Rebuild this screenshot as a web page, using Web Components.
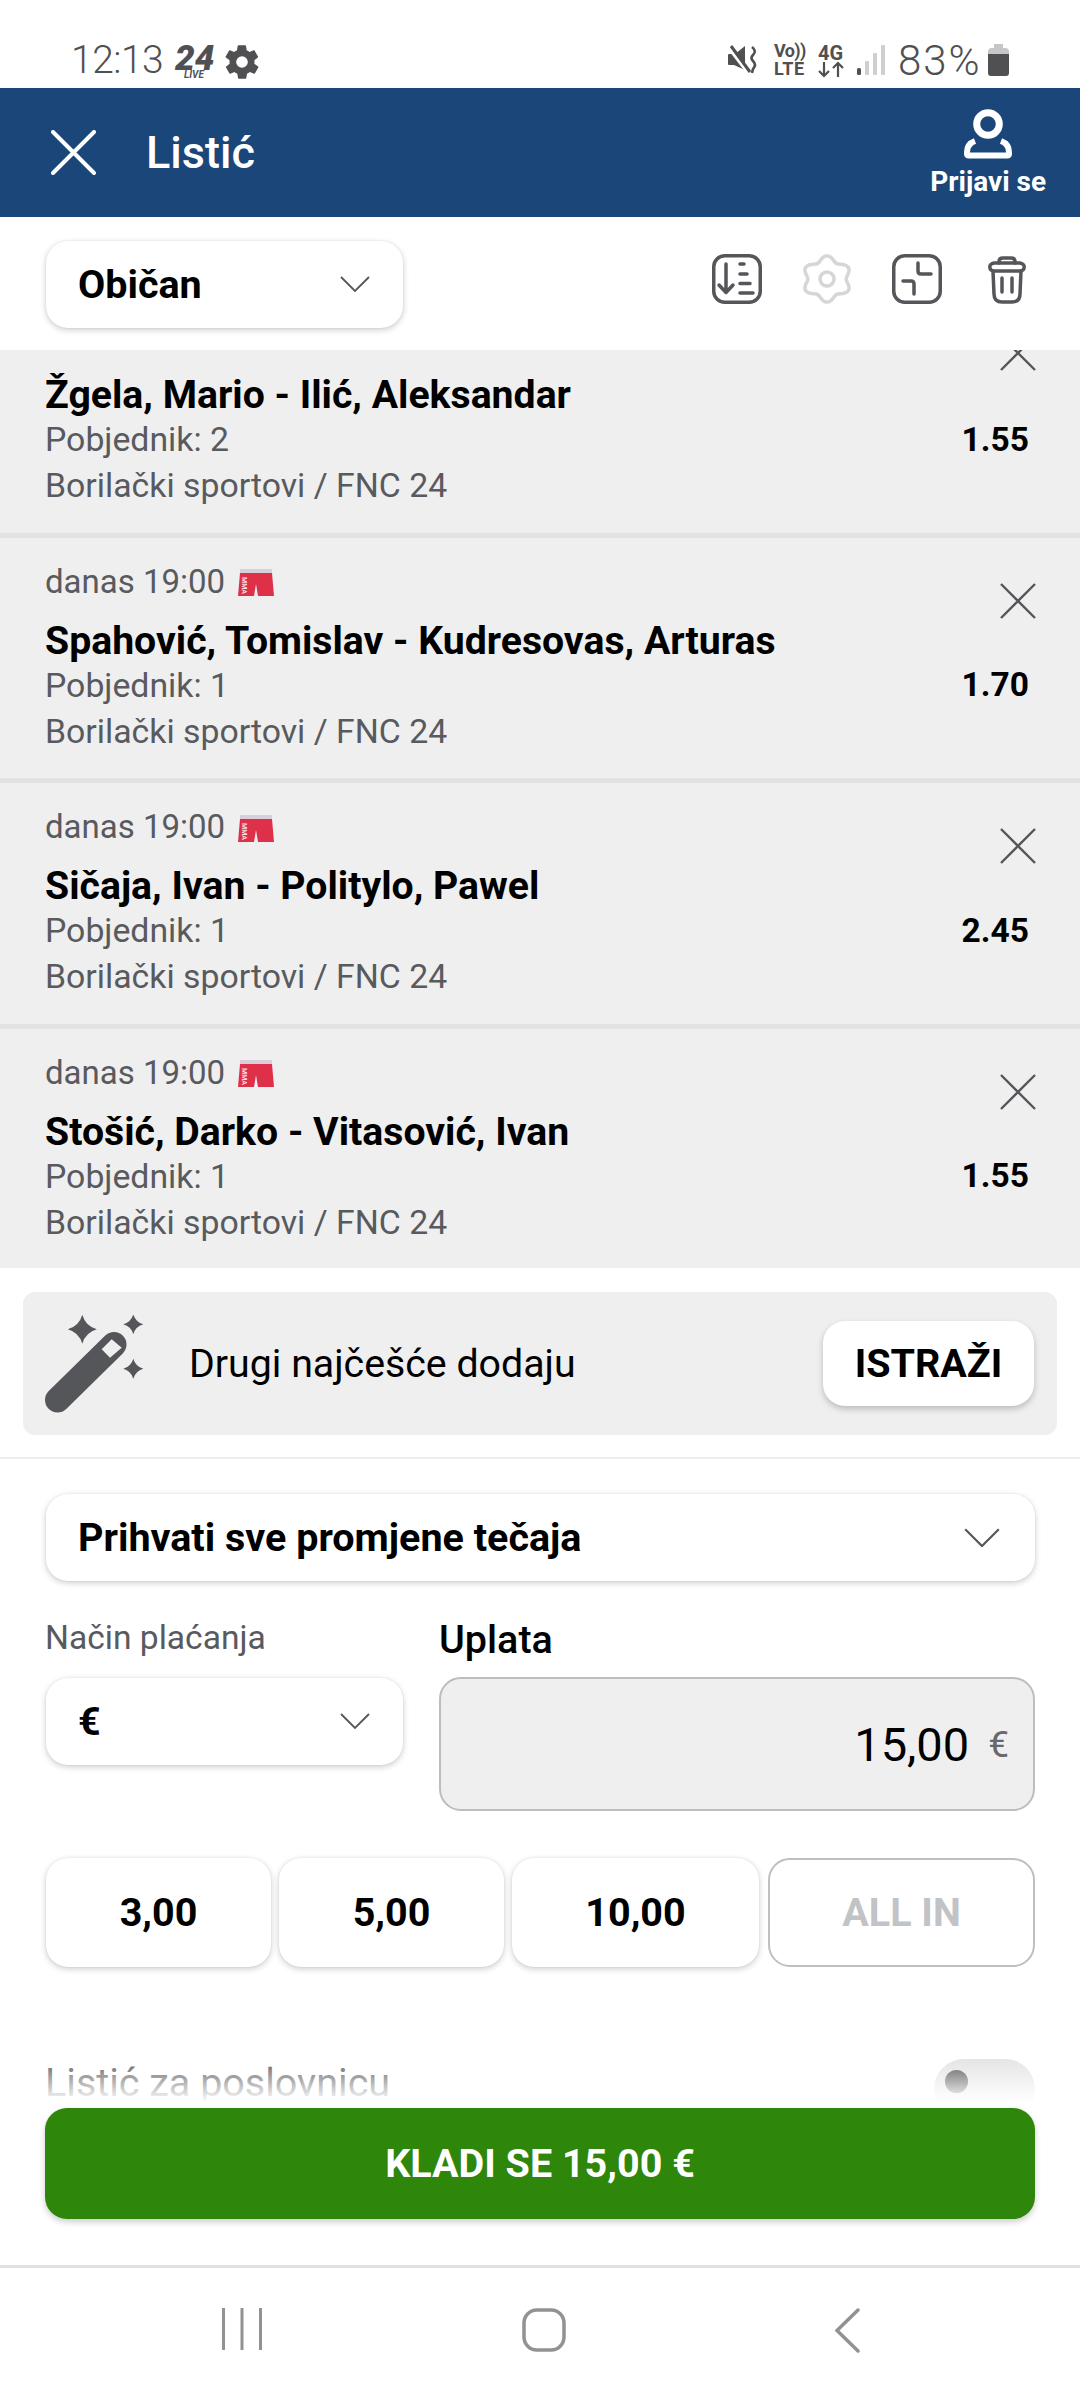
<!DOCTYPE html>
<html lang="hr">
<head>
<meta charset="utf-8">
<title>Listić</title>
<style>
	html, body { margin: 0; padding: 0; background: #fff; }
	body { font-family: Roboto, "Liberation Sans", sans-serif; }
</style>
</head>
<body>
<bet-app></bet-app>

<script>
const CLOSE = `<svg width="36" height="36" viewBox="0 0 36 36" fill="none"><path d="M1 1 35 35M35 1 1 35" stroke="#55565a" stroke-width="2.4"/></svg>`;

const SHORTS = `<svg width="36" height="28" viewBox="0 0 36 28">
	<path d="M2 0H34V4H2Z" fill="#d8cfdb"/>
	<path d="M2 4H34L36 27H20L18 15 16 27H0Z" fill="#df3049"/>
	<text transform="translate(4 8) rotate(90)" font-family="Roboto" font-weight="700" font-size="7" fill="#f7dfe3">MMA</text>
</svg>`;

// four point sparkle, used by the wand
const star = (x, y, r) => {
	const k = r * 0.22;
	return `M${x} ${y - r}Q${x + k} ${y - k} ${x + r} ${y}Q${x + k} ${y + k} ${x} ${y + r}Q${x - k} ${y + k} ${x - r} ${y}Q${x - k} ${y - k} ${x} ${y - r}Z`;
};

// six lobed cog outline
const cog = () => {
	const pts = [];
	for (let i = 0; i < 72; i++) {
		const t = (i / 72) * Math.PI * 2 - Math.PI / 2;
		const r = 20.5 + 2.6 * Math.cos(6 * (t + Math.PI / 2));
		pts.push(`${(24 + 1.07 * r * Math.cos(t)).toFixed(1)} ${(25 + r * Math.sin(t)).toFixed(1)}`);
	}
	return 'M' + pts.join('L') + 'Z';
};

window.customElements.define(
	'status-bar',
	class extends HTMLElement {
		constructor() {
			super();
			const root = this.attachShadow({ mode: 'open' });
			root.innerHTML = `
				<style>
					:host { display: flex; align-items: flex-start; height: 88px; box-sizing: border-box; padding: 0 71px; color: #505052; background: #fff; }
					.left, .right { display: flex; align-items: center; height: 34px; margin-top: 43px; }
					.right { margin-left: auto; }
					.time { font-size: 39px; font-weight: 300; width: 105px; letter-spacing: -0.5px; }
					.pct { font-size: 42px; font-weight: 300; margin-left: 13px; letter-spacing: 2px; width: 83px; }
					svg { display: block; flex: none; overflow: visible; }
					.stack { display: flex; flex-direction: column; font-size: 18px; font-weight: 700; line-height: 18px; }
				</style>
				<div class="left">
					<span class="time">12:13</span>
					<svg width="39" height="34" viewBox="0 0 39 34">
						<text x="-1" y="27" font-family="Roboto" font-weight="900" font-style="italic" font-size="35" fill="#505052">24</text>
						<text x="8" y="35" font-family="Roboto" font-weight="700" font-style="italic" font-size="10" fill="#505052">LIVE</text>
					</svg>
					<svg style="margin:4px 0 0 7px" width="40" height="40" viewBox="0 0 24 24"><path fill="#505052" fill-rule="evenodd" d="M19.4 13c.1-.3.1-.7.1-1s0-.7-.1-1l2.1-1.700c.2-.2.2-.4.1-.6l-2-3.500c-.1-.2-.4-.3-.6-.2l-2.500 1c-.5-.4-1.100-.7-1.700-1l-.4-2.600c0-.2-.2-.4-.5-.4h-4c-.3 0-.5.2-.5.4l-.4 2.600c-.6.3-1.200.6-1.700 1l-2.500-1c-.2-.1-.5 0-.6.2l-2 3.500c-.1.2-.1.5.1.6L4.600 11c-.1.3-.1.7-.1 1s0 .7.1 1l-2.100 1.700c-.2.2-.2.4-.1.6l2 3.500c.1.2.4.3.6.2l2.500-1c.5.4 1.100.7 1.700 1l.4 2.600c0 .2.2.4.5.4h4c.3 0 .5-.2.5-.4l.4-2.600c.6-.3 1.200-.6 1.700-1l2.500 1c.2.1.5 0 .6-.2l2-3.500c.1-.2.1-.5-.1-.6L19.400 13zM12 15.500a3.500 3.500 0 1 1 0-7 3.500 3.500 0 0 1 0 7z"/></svg>
				</div>
				<div class="right">
					<svg width="29" height="28" viewBox="0 0 29 28" fill="none">
						<path d="M0 9Q0 8 1 8H7L17 0V24L6 19H1Q0 19 0 18Z" fill="#505052"/>
						<path d="M0 1 20 27" stroke="#fff" stroke-width="3"/>
						<path d="M3 0 22 26" stroke="#505052" stroke-width="3"/>
						<path d="M24 1 Q29 5 25 9 Q22 12 25 15 Q29 19 25 23 L24 27" stroke="#505052" stroke-width="2.600"/>
					</svg>
					<div class="stack" style="margin-left:17px;width:32px">
						<span style="letter-spacing:-.6px">Vo))</span><span style="letter-spacing:.5px">LTE</span>
					</div>
					<div class="stack" style="margin-left:11px;width:27px;align-items:center">
						<span style="font-size:20px">4G</span>
						<svg width="26" height="15" viewBox="0 0 26 15" fill="none" stroke="#505052" stroke-width="2.200"><path d="M6 0V14M1 9 6 14 11 9M20 15V1M15 6 20 1 25 6"/></svg>
					</div>
					<svg style="margin-left:13px" width="28" height="32" viewBox="0 0 28 32">
						<rect x="0" y="24" width="4" height="7" rx="1.500" fill="#505052"/>
						<rect x="8" y="17" width="4" height="14" rx="1" fill="#cfcfd0"/>
						<rect x="16" y="9" width="4" height="22" rx="1" fill="#cfcfd0"/>
						<rect x="24" y="1" width="4" height="30" rx="1" fill="#cfcfd0"/>
					</svg>
					<span class="pct">83%</span>
					<svg style="margin-left:7px" width="21" height="32" viewBox="0 0 21 32">
						<path d="M6 0H15V4H6Z" fill="#c6c6c7"/>
						<path d="M0 8Q0 4 4 4H17Q21 4 21 8V10H0Z" fill="#c6c6c7"/>
						<path d="M0 10H21V29Q21 32 18 32H3Q0 32 0 29Z" fill="#505052"/>
					</svg>
				</div>
			`;
		}
	}
);

window.customElements.define(
	'app-header',
	class extends HTMLElement {
		constructor() {
			super();
			const root = this.attachShadow({ mode: 'open' });
			root.innerHTML = `
				<style>
					:host { display: flex; align-items: center; height: 129px; background: #1b4679; color: #fff; padding: 0 34px 0 51px; }
					h1 { margin: 0 0 0 50px; font-size: 45px; font-weight: 500; line-height: 50px; }
					.login { margin-left: auto; display: flex; flex-direction: column; align-items: center; font-size: 28px; font-weight: 700; line-height: 32px; }
					svg { display: block; }
					.login svg { margin-bottom: 6px; }
				</style>
				<svg width="45" height="45" viewBox="0 0 45 45" fill="none"><path d="M2 2 43 43M43 2 2 43" stroke="#fff" stroke-width="4" stroke-linecap="round"/></svg>
				<h1>Listić</h1>
				<div class="login">
					<svg width="50" height="52" viewBox="0 0 50 52" fill="none" stroke="#fff">
						<circle cx="25" cy="16" r="11.300" stroke-width="7"/>
						<path d="M12 33 Q4 36 4 44 V45.500 Q4 47.500 6 47.500 H44 Q46 47.500 46 45.500 V44 Q46 36 38 33" stroke-width="6"/>
					</svg>
					<span>Prijavi se</span>
				</div>
			`;
		}
	}
);

window.customElements.define(
	'drop-select',
	class extends HTMLElement {
		constructor() {
			super();
			const root = this.attachShadow({ mode: 'open' });
			const w = +(this.getAttribute('chevron') || 30);
			root.innerHTML = `
				<style>
					:host { display: flex; align-items: center; justify-content: space-between; box-sizing: border-box; height: 87px; padding: 0 33px 0 32px; background: #fff; border-radius: 22px; box-shadow: 0 2px 6px rgba(0,0,0,.2), 0 0 2px rgba(0,0,0,.08); font-size: 39.5px; font-weight: 700; color: #000; }
					svg { display: block; flex: none; }
				</style>
				<slot></slot>
				<svg width="${w}" height="${w * 0.55}" viewBox="0 0 30 16.500" fill="none"><path d="M1 1 15 15 29 1" stroke="#555659" stroke-width="1.800"/></svg>
			`;
		}
	}
);

window.customElements.define(
	'slip-toolbar',
	class extends HTMLElement {
		constructor() {
			super();
			const root = this.attachShadow({ mode: 'open' });
			root.innerHTML = `
				<style>
					:host { display: flex; height: 133px; box-sizing: border-box; padding: 24px 54px 0 46px; background: #fff; }
					drop-select { width: 357px; }
					.tools { margin-left: auto; display: flex; gap: 41px; height: 52px; margin-top: 13px; }
					svg { display: block; }
				</style>
				<drop-select>Običan</drop-select>
				<div class="tools">
					<svg width="50" height="50" viewBox="0 0 50 50" fill="none" stroke="#55565a" stroke-width="3.500" stroke-linecap="round" stroke-linejoin="round">
						<rect x="1.750" y="1.750" width="46.500" height="46.500" rx="11"/>
						<path d="M14 10V38M7 31 14 38.500 21 31"/>
						<path d="M28 10H32M28 20H35M28 29.500H38M28 39H41"/>
					</svg>
					<svg width="48" height="50" viewBox="0 0 48 50" fill="none" stroke="#d6d6d7" stroke-width="3.500" stroke-linejoin="round">
						<path d="${cog()}"/>
						<circle cx="24" cy="25" r="7"/>
					</svg>
					<svg width="50" height="50" viewBox="0 0 50 50" fill="none" stroke="#55565a" stroke-width="3.500" stroke-linecap="round" stroke-linejoin="round">
						<rect x="1.750" y="1.750" width="46.500" height="46.500" rx="11"/>
						<path d="M26 9V17Q26 20 29 20H39"/>
						<path d="M11 27H19Q22 27 22 30V40"/>
					</svg>
					<svg style="margin-left:5px;margin-top:2px" width="38" height="48" viewBox="0 0 38 48" fill="none" stroke="#55565a" stroke-width="3.500" stroke-linecap="round" stroke-linejoin="round">
						<path d="M11 7V5.500Q11 2 15 2H23Q27 2 27 5.500V7"/>
						<path d="M6 7H32Q37 8 36 12Q36 14 33 15H5Q2 14 2 12Q1 8 6 7Z"/>
						<path d="M5 15L6 38Q6 46 14 46H24Q32 46 32 38L33 15"/>
						<path d="M14 22V36M24 22V36"/>
					</svg>
				</div>
			`;
		}
	}
);

window.customElements.define(
	'bet-row',
	class extends HTMLElement {
		constructor() {
			super();
			const root = this.attachShadow({ mode: 'open' });
			const date = this.getAttribute('date');
			root.innerHTML = `
				<style>
					:host { display: block; position: relative; box-sizing: border-box; background: #efeff0; padding: 22px 33px 23.500px 45px; color: #595a5e; font-size: 33.800px; }
					:host(:not(:last-child)) { border-bottom: 5px solid #e2e2e4; }
					.date { display: flex; align-items: center; gap: 13px; height: 44px; margin-bottom: 14px; line-height: 44px; font-size: 33px; }
					.date svg { margin-top: 3px; }
					.title { color: #000; font-size: 39.200px; font-weight: 700; line-height: 46px; white-space: nowrap; }
					.pick { line-height: 43px; }
					.league { line-height: 46px; margin-top: 2px; }
					.odds { position: absolute; right: 51px; color: #000; font-size: 33.500px; font-weight: 700; bottom: 70px; line-height: 46px; }
					.x { position: absolute; right: 44px; top: 45px; }
					:host([cut]) .x { top: -15px; }
					svg { display: block; }
				</style>
				${date ? `<div class="date"><span>${date}</span>${SHORTS}</div>` : ''}
				<div class="title"><slot></slot></div>
				<div class="pick">${this.getAttribute('pick')}</div>
				<div class="league">Borilački sportovi / FNC 24</div>
				<div class="odds">${this.getAttribute('odds')}</div>
				<div class="x">${CLOSE}</div>
			`;
		}
	}
);

window.customElements.define(
	'suggest-banner',
	class extends HTMLElement {
		constructor() {
			super();
			const root = this.attachShadow({ mode: 'open' });
			root.innerHTML = `
				<style>
					:host { display: flex; align-items: center; height: 143px; margin: 24px 23px 0; padding: 0 23px 0 22px; background: #efeff0; border-radius: 12px; color: #000; font-size: 39.300px; }
					span { margin-left: 44px; }
					button { margin-left: auto; width: 211px; height: 85px; padding: 0; border: 0; border-radius: 22px; background: #fff; box-shadow: 0 3px 6px rgba(0,0,0,.22); font: 700 39.500px Roboto, sans-serif; color: #000; }
					svg { display: block; flex: none; }
				</style>
				<svg width="100" height="98" viewBox="0 0 100 98" fill="#55565a">
					<path d="M12.500 85 69 29.500" stroke="#55565a" stroke-width="25" stroke-linecap="round"/>
					<path d="M66.700 24.300 76.700 32.700 65 42.700 56.700 34.300Z" fill="#efeff0"/>
					<path d="${star(37.300, 14.300, 14.500)}"/>
					<path d="${star(88.300, 9.300, 10)}"/>
					<path d="${star(88.300, 53.700, 10)}"/>
				</svg>
				<span>Drugi najčešće dodaju</span>
				<button>ISTRAŽI</button>
			`;
		}
	}
);

window.customElements.define(
	'stake-form',
	class extends HTMLElement {
		constructor() {
			super();
			const root = this.attachShadow({ mode: 'open' });
			root.innerHTML = `
				<style>
					:host { display: block; position: relative; height: 808px; box-sizing: border-box; padding: 0 45px 0 46px; background: #fff; margin-top: 22px; border-top: 2px solid #eeeeef; overflow: hidden; color: #000; }
					.accept { margin-top: 35px; padding-right: 35px; }
					.pay { display: grid; grid-template-columns: 357px 596px; column-gap: 36px; margin-top: 35px; }
					.pay-label { font-size: 33.600px; color: #595a5e; line-height: 40px; margin: 2px 0 0 -1px; }
					.up-label { font-size: 39.500px; font-weight: 500; line-height: 44px; margin-top: 2px; }
					.input { display: flex; align-items: center; justify-content: flex-end; gap: 19px; box-sizing: border-box; height: 134px; margin-top: 15px; padding-right: 24px; background: #efeff0; border: 2px solid #bdbdbe; border-radius: 22px; font-size: 47px; }
					.input i { font-style: normal; font-size: 37px; color: #67686b; }
					.pay drop-select { margin-top: 16px; }
					.quick { display: flex; gap: 8px; margin-top: 47px; height: 109px; }
					.quick div { display: flex; align-items: center; justify-content: center; box-sizing: border-box; height: 109px; background: #fff; border-radius: 22px; font-size: 39.500px; font-weight: 700; box-shadow: 0 2px 6px rgba(0,0,0,.2), 0 0 2px rgba(0,0,0,.08); }
					.quick .all { margin-left: 1px; color: #c2c3c6; box-shadow: none; border: 2px solid #bfbfc0; }
					.slip { display: flex; align-items: center; justify-content: space-between; height: 60px; margin-top: 85px; font-size: 39.500px; color: #595a5e; }
					.slip span { margin-left: -1px; }
					.toggle { position: relative; width: 101px; height: 60px; margin-top: 14px; border-radius: 30px; background: #e4e4e5; }
					.toggle::after { content: ""; position: absolute; left: 11px; top: 11px; width: 23px; height: 23px; border-radius: 50%; background: #55565a; }
					.fade { position: absolute; left: 0; right: 0; top: 599px; height: 52px; background: linear-gradient(rgba(255,255,255,0), #fff 85%); }
					.cover { position: absolute; left: 0; right: 0; top: 649px; bottom: 0; background: #fff; display: flex; flex-direction: column; }
					.bet { margin: 0 45px; height: 111px; display: flex; align-items: center; justify-content: center; background: #2e860b; color: #fff; border-radius: 22px; font-size: 39.500px; font-weight: 700; box-shadow: 0 3px 6px rgba(0,0,0,.2); }
				</style>
				<drop-select class="accept" chevron="36">Prihvati sve promjene tečaja</drop-select>
				<div class="pay">
					<div class="pay-label">Način plaćanja</div>
					<div class="up-label">Uplata</div>
					<drop-select>€</drop-select>
					<div class="input">15,00 <i>€</i></div>
				</div>
				<div class="quick">
					<div style="width:225px">3,00</div>
					<div style="width:225px">5,00</div>
					<div style="width:247px">10,00</div>
					<div class="all" style="width:267px">ALL IN</div>
				</div>
				<div class="slip"><span>Listić za poslovnicu</span><div class="toggle"></div></div>
				<div class="fade"></div>
				<div class="cover"><div class="bet">KLADI SE 15,00 €</div></div>
			`;
		}
	}
);

window.customElements.define(
	'nav-bar',
	class extends HTMLElement {
		constructor() {
			super();
			const root = this.attachShadow({ mode: 'open' });
			root.innerHTML = `
				<style>
					:host { display: flex; height: 135px; box-sizing: border-box; border-top: 3px solid #e1e1e2; background: #fff; padding: 40px 0 0 222px; align-items: flex-start; }
					svg { display: block; }
				</style>
				<svg width="40" height="42" viewBox="0 0 40 42" fill="none" stroke="#929293" stroke-width="3"><path d="M1.500 0V42M20 0V42M38.500 0V42"/></svg>
				<svg style="margin-left:260px" width="44" height="44" viewBox="0 0 44 44" fill="none" stroke="#929293" stroke-width="3.500"><rect x="2" y="2" width="40" height="40" rx="13"/></svg>
				<svg style="margin-left:269px" width="25" height="45" viewBox="0 0 25 45" fill="none" stroke="#929293" stroke-width="3.500" stroke-linecap="round"><path d="M23 2 2 22.500 23 43"/></svg>
			`;
		}
	}
);

window.customElements.define(
	'bet-app',
	class extends HTMLElement {
		constructor() {
			super();
			const root = this.attachShadow({ mode: 'open' });
			root.innerHTML = `
				<style>
					:host { display: flex; flex-direction: column; width: 1080px; height: 2400px; overflow: hidden; background: #fff; font-family: Roboto, "Liberation Sans", sans-serif; }
					.list { height: 918px; overflow: hidden; flex: none; background: #efeff0; }
				</style>
				<status-bar></status-bar>
				<app-header></app-header>
				<slip-toolbar></slip-toolbar>
				<div class="list">
					<bet-row cut pick="Pobjednik: 2" odds="1.55">Žgela, Mario - Ilić, Aleksandar</bet-row>
					<bet-row date="danas 19:00" pick="Pobjednik: 1" odds="1.70">Spahović, Tomislav - Kudresovas, Arturas</bet-row>
					<bet-row date="danas 19:00" pick="Pobjednik: 1" odds="2.45">Sičaja, Ivan - Politylo, Pawel</bet-row>
					<bet-row date="danas 19:00" pick="Pobjednik: 1" odds="1.55">Stošić, Darko - Vitasović, Ivan</bet-row>
				</div>
				<suggest-banner></suggest-banner>
				<stake-form></stake-form>
				<nav-bar></nav-bar>
			`;
		}
	}
);
</script>
</body>
</html>
